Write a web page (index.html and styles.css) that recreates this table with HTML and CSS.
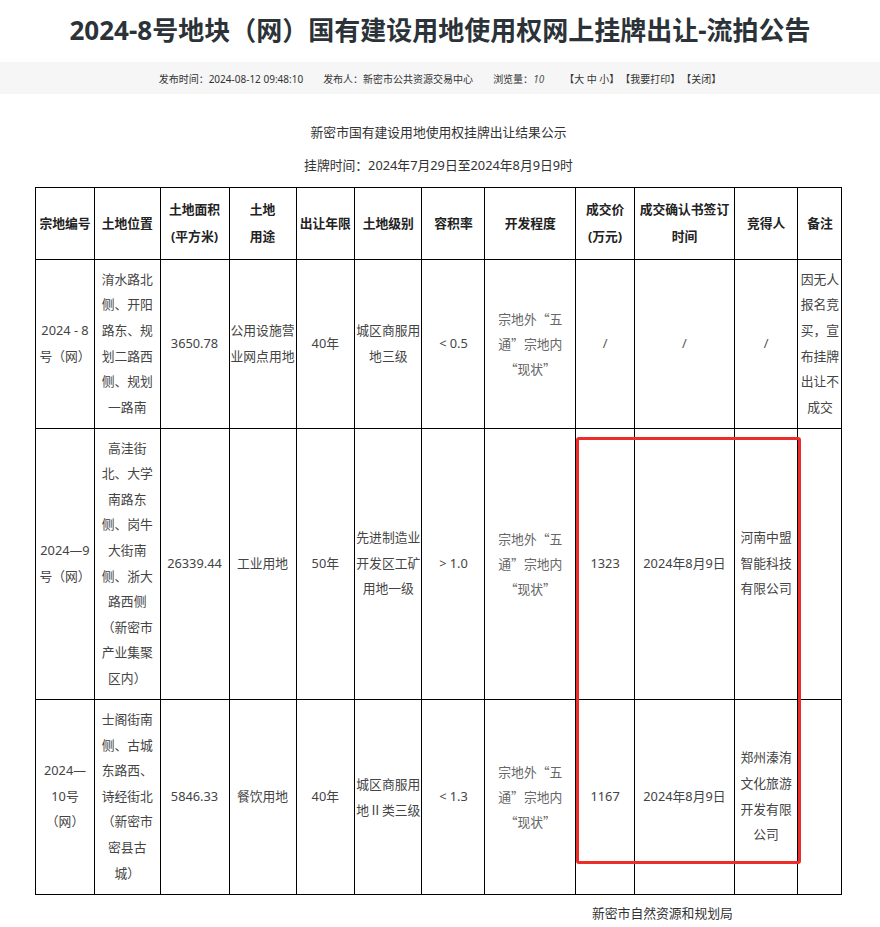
FILE: index.html
```html
<!DOCTYPE html>
<html lang="zh-CN">
<head>
<meta charset="utf-8">
<title>2024-8号地块（网）国有建设用地使用权网上挂牌出让-流拍公告</title>
<link rel="stylesheet" href="styles.css">
</head>
<body>
<h1 class="title">2024-8号地块（网）国有建设用地使用权网上挂牌出让-流拍公告</h1>
<div class="meta">
  <span class="meta-item">发布时间：2024-08-12 09:48:10</span>
  <span class="meta-item">发布人：新密市公共资源交易中心</span>
  <span class="meta-item">浏览量：<i class="views">10</i></span>
  <span class="meta-item tools"><span>【大 中 小】</span><span>【我要打印】</span><span>【关闭】</span></span>
</div>
<div class="article">
  <div class="heads">
    <p class="sub">新密市国有建设用地使用权挂牌出让结果公示</p>
    <p class="sub">挂牌时间：2024年7月29日至2024年8月9日9时</p>
  </div>
  <div class="table-wrap">
    <table class="result">
      <colgroup>
        <col class="c1"><col class="c2"><col class="c3"><col class="c4"><col class="c5"><col class="c6">
        <col class="c7"><col class="c8"><col class="c9"><col class="c10"><col class="c11"><col class="c12">
      </colgroup>
      <tr class="head">
        <th>宗地编号</th>
        <th>土地位置</th>
        <th>土地面积<br>(平方米)</th>
        <th>土地<br>用途</th>
        <th>出让年限</th>
        <th>土地级别</th>
        <th>容积率</th>
        <th>开发程度</th>
        <th>成交价<br>(万元)</th>
        <th>成交确认书签订<br>时间</th>
        <th>竞得人</th>
        <th>备注</th>
      </tr>
      <tr class="r1">
        <td>2024 - 8<br>号（网）</td>
        <td>淯水路北<br>侧、开阳<br>路东、规<br>划二路西<br>侧、规划<br>一路南</td>
        <td>3650.78</td>
        <td>公用设施营<br>业网点用地</td>
        <td>40年</td>
        <td>城区商服用<br>地三级</td>
        <td>&lt; 0.5</td>
        <td class="dev">宗地外“五<br>通”宗地内<br>“现状”</td>
        <td class="none">/</td>
        <td class="none">/</td>
        <td class="none">/</td>
        <td>因无人<br>报名竞<br>买，宣<br>布挂牌<br>出让不<br>成交</td>
      </tr>
      <tr class="r2">
        <td>2024—9<br>号（网）</td>
        <td>高洼街<br>北、大学<br>南路东<br>侧、岗牛<br>大街南<br>侧、浙大<br>路西侧<br>（新密市<br>产业集聚<br>区内）</td>
        <td>26339.44</td>
        <td>工业用地</td>
        <td>50年</td>
        <td>先进制造业<br>开发区工矿<br>用地一级</td>
        <td>&gt; 1.0</td>
        <td class="dev">宗地外“五<br>通”宗地内<br>“现状”</td>
        <td>1323</td>
        <td>2024年8月9日</td>
        <td>河南中盟<br>智能科技<br>有限公司</td>
        <td></td>
      </tr>
      <tr class="r3">
        <td>2024—<br>10号<br>（网）</td>
        <td>士阁街南<br>侧、古城<br>东路西、<br>诗经街北<br>（新密市<br>密县古<br>城）</td>
        <td>5846.33</td>
        <td>餐饮用地</td>
        <td>40年</td>
        <td class="cjk">城区商服用<br>地Ⅱ类三级</td>
        <td>&lt; 1.3</td>
        <td class="dev">宗地外“五<br>通”宗地内<br>“现状”</td>
        <td>1167</td>
        <td>2024年8月9日</td>
        <td>郑州溱洧<br>文化旅游<br>开发有限<br>公司</td>
        <td></td>
      </tr>
    </table>
    <div class="mark"></div>
  </div>
  <p class="sign">新密市自然资源和规划局</p>
</div>
</body>
</html>
```

FILE: styles.css
```css
html, body {
  margin: 0;
  padding: 0;
  background: #fff;
}

body {
  font-family: "Noto Sans", "Noto Sans CJK SC", sans-serif;
  color: #333;
}

.title {
  margin: 12px 0 14px;
  font-size: 26px;
  line-height: 36px;
  font-weight: 700;
  text-align: center;
  color: #2b3238;
}

.meta {
  height: 32px;
  background: #f6f6f6;
  display: flex;
  justify-content: center;
  align-items: center;
  gap: 20px;
  font-size: 10px;
  color: #333;
}

.views {
  color: #555;
}

.tools {
  display: flex;
  gap: 1px;
}

.article {
  padding: 0 38px 0 35px;
}

.heads {
  display: flex;
  flex-direction: column;
  gap: 7.4px;
  padding-top: 26px;
  margin-bottom: 8px;
}

.sub {
  margin: 0;
  font-size: 12.8px;
  line-height: 25.6px;
  text-align: center;
  color: #333;
}

.table-wrap {
  position: relative;
}

.result {
  border-collapse: collapse;
  table-layout: fixed;
  width: 807px;
  font-size: 12.8px;
}

.result th,
.result td {
  border: 1px solid #000;
  padding: 0 1px;
  text-align: center;
  vertical-align: middle;
  white-space: nowrap;
}

.result th {
  font-weight: 700;
  color: #222;
  line-height: 26.7px;
}

.result td {
  color: #444;
  line-height: 25.6px;
}

.result td.dev {
  font-family: "Noto Sans CJK SC", sans-serif;
  color: #666;
  line-height: 25px;
}

.result td.cjk {
  font-family: "Noto Sans CJK SC", sans-serif;
}

.result td.none {
  color: #555;
}

.c1 { width: 59px; }
.c2 { width: 65.5px; }
.c3 { width: 69px; }
.c4 { width: 67px; }
.c5 { width: 58.6px; }
.c6 { width: 67.4px; }
.c7 { width: 63px; }
.c8 { width: 90.6px; }
.c9 { width: 59px; }
.c10 { width: 99.7px; }
.c11 { width: 63.7px; }
.c12 { width: 44px; }

.head { height: 72px; }
.r1 { height: 169px; }
.r2 { height: 271px; }
.r3 { height: 195px; }

.mark {
  position: absolute;
  left: 541px;
  top: 250.5px;
  width: 224.5px;
  height: 427px;
  box-sizing: border-box;
  border: 3px solid #ee2d2a;
  border-radius: 3px;
  pointer-events: none;
}

.sign {
  margin: 6px 0 0;
  padding-left: 557px;
  font-size: 12.8px;
  line-height: 25.6px;
  color: #333;
}
```
